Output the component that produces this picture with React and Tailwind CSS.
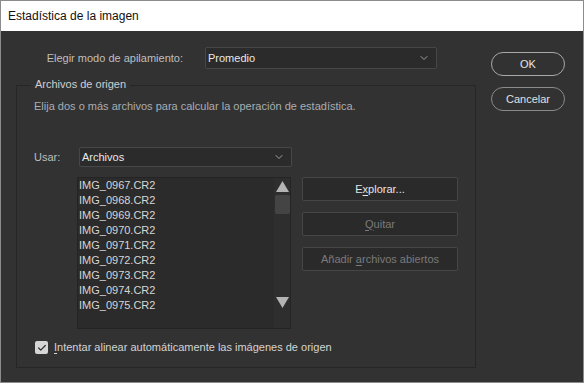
import { ChevronDown, Check } from 'lucide-react';

const files = [
  'IMG_0967.CR2',
  'IMG_0968.CR2',
  'IMG_0969.CR2',
  'IMG_0970.CR2',
  'IMG_0971.CR2',
  'IMG_0972.CR2',
  'IMG_0973.CR2',
  'IMG_0974.CR2',
  'IMG_0975.CR2',
];

const Select = ({ value, className }) => (
  <div
    className={`flex items-center justify-between bg-[#2b2b2b] border border-[#474747] rounded-[2px] pl-[2px] pr-[6px] text-[#e8e8e8] ${className}`}
  >
    <span>{value}</span>
    <ChevronDown size={12} strokeWidth={1.6} className="text-[#bdbdbd]" />
  </div>
);

const SideButton = ({ children, disabled }) => (
  <button
    className={`w-[156px] h-[24px] bg-[#2a2a2a] border border-[#464646] rounded-[2px] ${
      disabled ? 'text-[#7a7a7a]' : 'text-[#e6e6e6]'
    }`}
  >
    {children}
  </button>
);

export default function App() {
  return (
    <div className="w-[584px] h-[383px] border border-[#8c8c8c] bg-[#323232] flex flex-col text-[11px] font-['Liberation_Sans',sans-serif] leading-[13px]">
      {/* title bar */}
      <div className="h-[30px] bg-white flex items-center pl-[7px] text-[#111] text-[12px] shrink-0">
        Estadística de la imagen
      </div>

      <div className="flex flex-1">
        {/* left column */}
        <div className="w-[490px] flex flex-col">
          <div className="flex items-center mt-[16px] h-[22px]">
            <span className="w-[186px] pr-[4px] text-right whitespace-nowrap text-[#bfbfbf] shrink-0">
              Elegir modo de apilamiento:
            </span>
            <Select value="Promedio" className="ml-[18px] w-[232px] h-[22px]" />
          </div>

          {/* group box */}
          <div className="relative ml-[15px] mt-[16px] w-[460px] h-[283px] border border-[#262626]">
            <span className="absolute -top-[8px] left-[14px] px-[4px] bg-[#323232] text-[#d0d0d0]">
              Archivos de origen
            </span>
            <div className="ml-[17px] mt-[14px] text-[#a9adb2]">
              Elija dos o más archivos para calcular la operación de estadística.
            </div>

            <div className="flex items-center mt-[34px] h-[20px]">
              <span className="ml-[17px] w-[45px] text-[#bfbfbf]">Usar:</span>
              <Select value="Archivos" className="w-[213px] h-[20px]" />
            </div>

            <div className="flex mt-[10px]">
              {/* file list */}
              <div className="ml-[60px] w-[214px] h-[152px] bg-[#2b2b2b] border border-[#242424] flex">
                <div className="flex-1 pl-[1px] text-[#d6d6d6]">
                  {files.map((f) => (
                    <div key={f} className="h-[15px] flex items-center">
                      {f}
                    </div>
                  ))}
                </div>
                <div className="w-[16px] bg-[#2e2e2e] flex flex-col items-center pt-[3px]">
                  <svg width="13" height="11" viewBox="0 0 13 11">
                    <polygon points="6.5,0 13,11 0,11" fill="#b4b4b4" />
                  </svg>
                  <div className="w-[15px] h-[19px] mt-[3px] bg-[#444] rounded-[2px]" />
                  <div className="flex-1" />
                  <svg width="13" height="11" viewBox="0 0 13 11" className="mb-[20px]">
                    <polygon points="0,0 13,0 6.5,11" fill="#b4b4b4" />
                  </svg>
                </div>
              </div>

              {/* buttons */}
              <div className="ml-[11px] flex flex-col gap-[11px]">
                <SideButton>
                  E<span className="underline underline-offset-2">x</span>plorar...
                </SideButton>
                <SideButton disabled>
                  <span className="underline underline-offset-2">Q</span>uitar
                </SideButton>
                <SideButton disabled>
                  Añadir <span className="underline underline-offset-2">a</span>rchivos abiertos
                </SideButton>
              </div>
            </div>

            <div className="flex items-center mt-[12px] ml-[18px]">
              <div className="w-[13px] h-[13px] bg-[#d6d6d6] rounded-[2px] flex items-center justify-center">
                <Check size={10} strokeWidth={3} className="text-[#333]" />
              </div>
              <span className="ml-[6px] text-[#d4d4d4]">
                <span className="underline underline-offset-2">I</span>ntentar alinear automáticamente las imágenes de origen
              </span>
            </div>
          </div>
        </div>

        {/* right column */}
        <div className="flex flex-col gap-[11px] mt-[21px]">
          <button className="w-[74px] h-[24px] rounded-full border border-[#a8a8a8] text-[#e6e6e6]">
            OK
          </button>
          <button className="w-[74px] h-[24px] rounded-full border border-[#8a8a8a] text-[#e0e0e0]">
            Cancelar
          </button>
        </div>
      </div>
    </div>
  );
}
